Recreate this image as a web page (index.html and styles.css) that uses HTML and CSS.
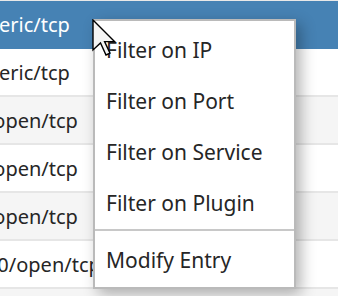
FILE: index.html
```html
<!DOCTYPE html>
<html lang="en">
<head>
  <meta charset="UTF-8" />
  <meta name="viewport" content="width=device-width, initial-scale=1.0"/>
  <title>Hosts</title>
  <link rel="stylesheet" href="styles.css">
</head>
<body>
  <div class="grid">
    <div class="row selected"><span class="cell">generic/tcp</span></div>
    <div class="row"><span class="cell">generic/tcp</span></div>
    <div class="row alt"><span class="cell">22/open/tcp</span></div>
    <div class="row"><span class="cell">80/open/tcp</span></div>
    <div class="row alt"><span class="cell">53/open/tcp</span></div>
    <div class="row"><span class="cell">5900/open/tcp</span></div>
    <div class="row alt"><span class="cell">8080/open/tcp</span></div>
  </div>

  <ul class="menu">
    <li class="item">Filter on IP</li>
    <li class="item">Filter on Port</li>
    <li class="item">Filter on Service</li>
    <li class="item">Filter on Plugin</li>
    <li class="sep"></li>
    <li class="item">Modify Entry</li>
  </ul>

  <svg class="cursor" width="24" height="38" viewBox="0 0 24 38">
    <path d="M1 1 L1 31 L8.5 24 L14 36 L18 34.2 L12.6 22.6 L22.5 22.6 Z" fill="#f4f4f4" stroke="#000" stroke-width="1.4" stroke-linejoin="miter"/>
  </svg>
</body>
</html>
```

FILE: styles.css
```css
* {
  margin: 0;
  padding: 0;
  box-sizing: border-box;
}
body {
  background: #fff;
  font-family: "Noto Sans", "Open Sans", sans-serif;
  color: #262626;
  height: 296px;
  overflow: hidden;
}
.grid {
  height: 296px;
  overflow: hidden;
  border-top: 1px solid #e8e8e8;
}
.row {
  height: 48px;
  display: flex;
  align-items: center;
  border-bottom: 2px solid #e6e6e6;
  background: #fff;
  font-size: 20px;
  white-space: nowrap;
}
.row.alt {
  background: #f5f5f5;
}
.row.selected {
  background: #4682b4;
  border-bottom-color: #4682b4;
  color: #fff;
}
.cell {
  margin-left: -37px;
}
.menu {
  position: absolute;
  left: 93px;
  top: 19px;
  width: 203px;
  height: 270px;
  list-style: none;
  background: #fff;
  border: 2px solid #bababa;
  box-shadow: 5px 5px 14px rgba(0, 0, 0, 0.3);
  padding-top: 4px;
  font-size: 21px;
  color: #262626;
}
.item {
  height: 51px;
  line-height: 51px;
  padding-left: 11px;
}
.sep {
  height: 2px;
  margin-bottom: 4px;
  background: #c8c8c8;
}
.cursor {
  position: absolute;
  left: 92px;
  top: 19px;
}
```
